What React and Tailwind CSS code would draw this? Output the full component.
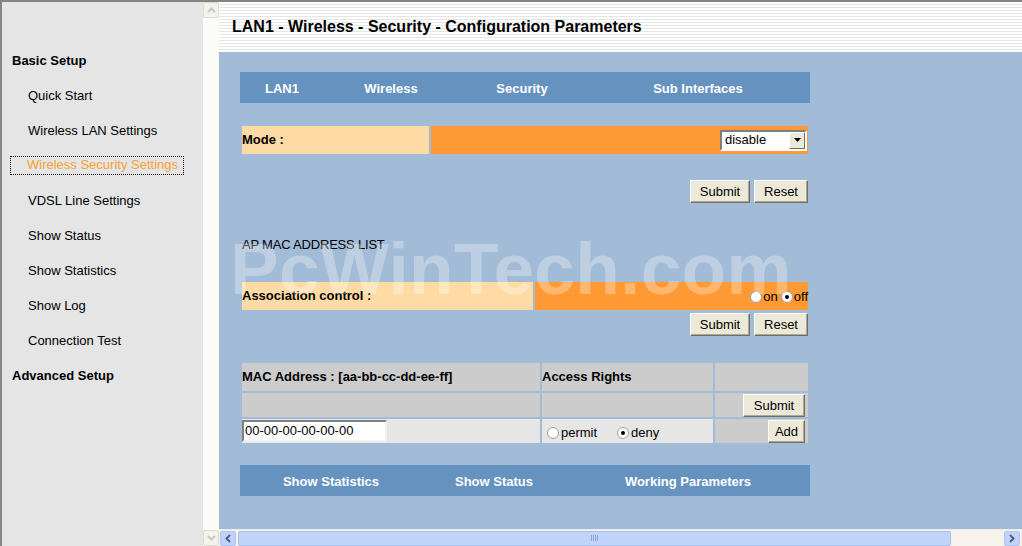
import React from "react";

const menu = [
  "Quick Start",
  "Wireless LAN Settings",
  "Wireless Security Settings",
  "VDSL Line Settings",
  "Show Status",
  "Show Statistics",
  "Show Log",
  "Connection Test",
];

const Btn = ({ children, className = "" }) => (
  <button
    type="button"
    className={
      "h-[23px] bg-[#ece9d8] border border-t-white border-l-white border-r-[#716f64] border-b-[#716f64] shadow-[inset_-1px_-1px_0_#aca899] text-[13px] text-black leading-none " +
      className
    }
  >
    {children}
  </button>
);

const Radio = ({ checked }) => (
  <span className="inline-flex w-[12px] h-[12px] rounded-full bg-white border border-[#a0a0a0] items-center justify-center align-middle">
    {checked && <span className="w-[4px] h-[4px] rounded-full bg-black" />}
  </span>
);

const Sidebar = () => (
  <div className="w-[201px] h-full bg-[#e5e5e5] pt-[50px] text-[13px] text-black">
    <div className="pl-[10px] font-bold h-[17px] leading-[17px]">Basic Setup</div>
    {menu.map((m, i) => (
      <div key={m} className="h-[35px] flex items-end">
        {i === 2 ? (
          <span className="ml-[9px] pl-[16px] w-[172px] h-[17px] leading-[15px] text-[#f7a233] outline-1 outline-dotted outline-black">
            {m}
          </span>
        ) : (
          <span className="pl-[26px] leading-[17px] h-[17px]">{m}</span>
        )}
      </div>
    ))}
    <div className="h-[35px] flex items-end">
      <span className="pl-[10px] font-bold leading-[17px] h-[17px]">Advanced Setup</span>
    </div>
  </div>
);

const VScroll = () => (
  <div className="w-[16px] h-full bg-[#fbfbf7] flex flex-col justify-between">
    <div className="w-[16px] h-[16px] border border-[#dcdcd4] rounded-[2px] bg-[#f3f2ec] flex items-center justify-center">
      <svg width="9" height="6" viewBox="0 0 9 6"><path d="M1 5 L4.5 1.5 L8 5" stroke="#c8c8c0" strokeWidth="2" fill="none" /></svg>
    </div>
    <div className="w-[16px] h-[16px] border border-[#dcdcd4] rounded-[2px] bg-[#f3f2ec] flex items-center justify-center">
      <svg width="9" height="6" viewBox="0 0 9 6"><path d="M1 1 L4.5 4.5 L8 1" stroke="#c8c8c0" strokeWidth="2" fill="none" /></svg>
    </div>
  </div>
);

const HScroll = () => (
  <div className="h-[17px] bg-[#f5f3ec] flex items-center gap-[2px] px-[1px] border-t border-[#eeeee8]">
    <div className="w-[16px] h-[15px] rounded-[2px] bg-[#c1d3fb] border border-[#b0c4f0] flex items-center justify-center">
      <svg width="6" height="9" viewBox="0 0 6 9"><path d="M5 1 L1.5 4.5 L5 8" stroke="#4d6185" strokeWidth="2" fill="none" /></svg>
    </div>
    <div className="w-[713px] h-[15px] rounded-[2px] bg-[#c3d4fc] border border-[#a8bfef] flex items-center justify-center">
      <span className="flex gap-[1px]">
        <span className="w-[1px] h-[6px] bg-[#8ca6dc]" />
        <span className="w-[1px] h-[6px] bg-[#8ca6dc]" />
        <span className="w-[1px] h-[6px] bg-[#8ca6dc]" />
        <span className="w-[1px] h-[6px] bg-[#8ca6dc]" />
      </span>
    </div>
    <div className="flex-1" />
    <div className="w-[16px] h-[15px] rounded-[2px] bg-[#c1d3fb] border border-[#b0c4f0] flex items-center justify-center mr-[1px]">
      <svg width="6" height="9" viewBox="0 0 6 9"><path d="M1 1 L4.5 4.5 L1 8" stroke="#4d6185" strokeWidth="2" fill="none" /></svg>
    </div>
  </div>
);

const TabBar = ({ items }) => (
  <div className="w-[570px] h-[31px] pt-[2px] bg-[#6592bf] flex items-center text-white font-bold text-[13px]">
    {items.map(([label, w]) => (
      <div key={label} className="text-center" style={{ width: w }}>
        {label}
      </div>
    ))}
  </div>
);

export default function App() {
  return (
    <div
      className="w-[1022px] h-[546px] overflow-hidden flex border-t-2 border-l-2 border-[#858585] bg-white"
      style={{ fontFamily: '"Liberation Sans", Arial, sans-serif' }}
    >
      <Sidebar />
      <VScroll />
      <div className="flex-1 flex flex-col min-w-0">
        <div className="h-[50px] flex items-center pl-[13px] bg-[repeating-linear-gradient(to_bottom,#ffffff_0px,#ffffff_2px,#e6e6e6_2px,#e6e6e6_3px)]">
          <h1 className="text-[16px] font-bold text-black">LAN1 - Wireless - Security - Configuration Parameters</h1>
        </div>
        <div className="relative flex-1 bg-[#a2bbd6] pl-[21px] pt-[20px] text-[13px] text-black">
          <TabBar
            items={[
              ["LAN1", 84],
              ["Wireless", 134],
              ["Security", 128],
              ["Sub Interfaces", 224],
            ]}
          />

          <div className="w-[566px] ml-[2px] mt-[23px] h-[28px] flex gap-[2px]">
            <div className="w-[187px] bg-[#fedba4] font-bold flex items-center">Mode :</div>
            <div className="flex-1 bg-[#ff9933] flex items-center justify-end pr-[1px]">
              <div className="w-[87px] h-[21px] bg-white border-2 border-t-[#7f7f7f] border-l-[#7f7f7f] border-b-white border-r-white flex items-center">
                <span className="flex-1 pl-[3px] text-[13px]">disable</span>
                <span className="w-[16px] h-[17px] bg-[#ece9d8] border border-t-white border-l-white border-r-[#716f64] border-b-[#716f64] flex items-center justify-center">
                  <svg width="7" height="4" viewBox="0 0 7 4"><path d="M0 0 H7 L3.5 4 Z" fill="#000" /></svg>
                </span>
              </div>
            </div>
          </div>

          <div className="w-[568px] flex justify-end gap-[4px] mt-[26px]">
            <Btn className="w-[60px]">Submit</Btn>
            <Btn className="w-[54px]">Reset</Btn>
          </div>

          <div className="mt-[34px] ml-[2px] h-[16px] leading-[16px] tracking-[-0.2px]">AP MAC ADDRESS LIST</div>

          <div className="w-[566px] ml-[2px] mt-[29px] h-[28px] flex gap-[2px]">
            <div className="w-[291px] bg-[#fedba4] font-bold flex items-center">Association control :</div>
            <div className="flex-1 bg-[#ff9933] flex items-center justify-end gap-[1px] pt-[2px]">
              <Radio /> <span className="mr-[2px]">on</span>
              <Radio checked /> <span>off</span>
            </div>
          </div>

          <div className="w-[568px] flex justify-end gap-[4px] mt-[3px]">
            <Btn className="w-[60px]">Submit</Btn>
            <Btn className="w-[54px]">Reset</Btn>
          </div>

          <div className="w-[570px] mt-[27px] px-[2px] grid grid-cols-[298px_171px_93px] gap-[2px]">
            <div className="h-[28px] bg-[#cccccc] font-bold flex items-center">MAC Address : [aa-bb-cc-dd-ee-ff]</div>
            <div className="h-[28px] bg-[#cccccc] font-bold flex items-center">Access Rights</div>
            <div className="h-[28px] bg-[#cccccc]" />
            <div className="h-[24px] bg-[#cccccc]" />
            <div className="h-[24px] bg-[#cccccc]" />
            <div className="h-[24px] bg-[#cccccc] flex items-center justify-end pr-[3px]">
              <Btn className="w-[62px]">Submit</Btn>
            </div>
            <div className="h-[24px] bg-[#e6e6e6] flex items-center">
              <div className="w-[145px] h-[22px] bg-white border-2 border-t-[#7f7f7f] border-l-[#7f7f7f] border-b-[#f0f0f0] border-r-[#f0f0f0] flex items-center pl-[1px]">
                00-00-00-00-00-00
              </div>
            </div>
            <div className="h-[24px] bg-[#e6e6e6] flex items-center pl-[5px] pt-[3px]">
              <Radio />
              <span className="ml-[2px] w-[56px]">permit</span>
              <Radio checked />
              <span className="ml-[2px]">deny</span>
            </div>
            <div className="h-[24px] bg-[#cccccc] flex items-center justify-end pr-[3px]">
              <Btn className="w-[37px]">Add</Btn>
            </div>
          </div>

          <div className="mt-[22px]">
            <TabBar
              items={[
                ["Show Statistics", 182],
                ["Show Status", 144],
                ["Working Parameters", 244],
              ]}
            />
          </div>

          <div className="absolute left-[11px] top-[180px] text-[73px] font-bold leading-none text-white/30 tracking-[0.3px] pointer-events-none select-none">
            PcWinTech.com
          </div>
        </div>
        <HScroll />
      </div>
    </div>
  );
}
